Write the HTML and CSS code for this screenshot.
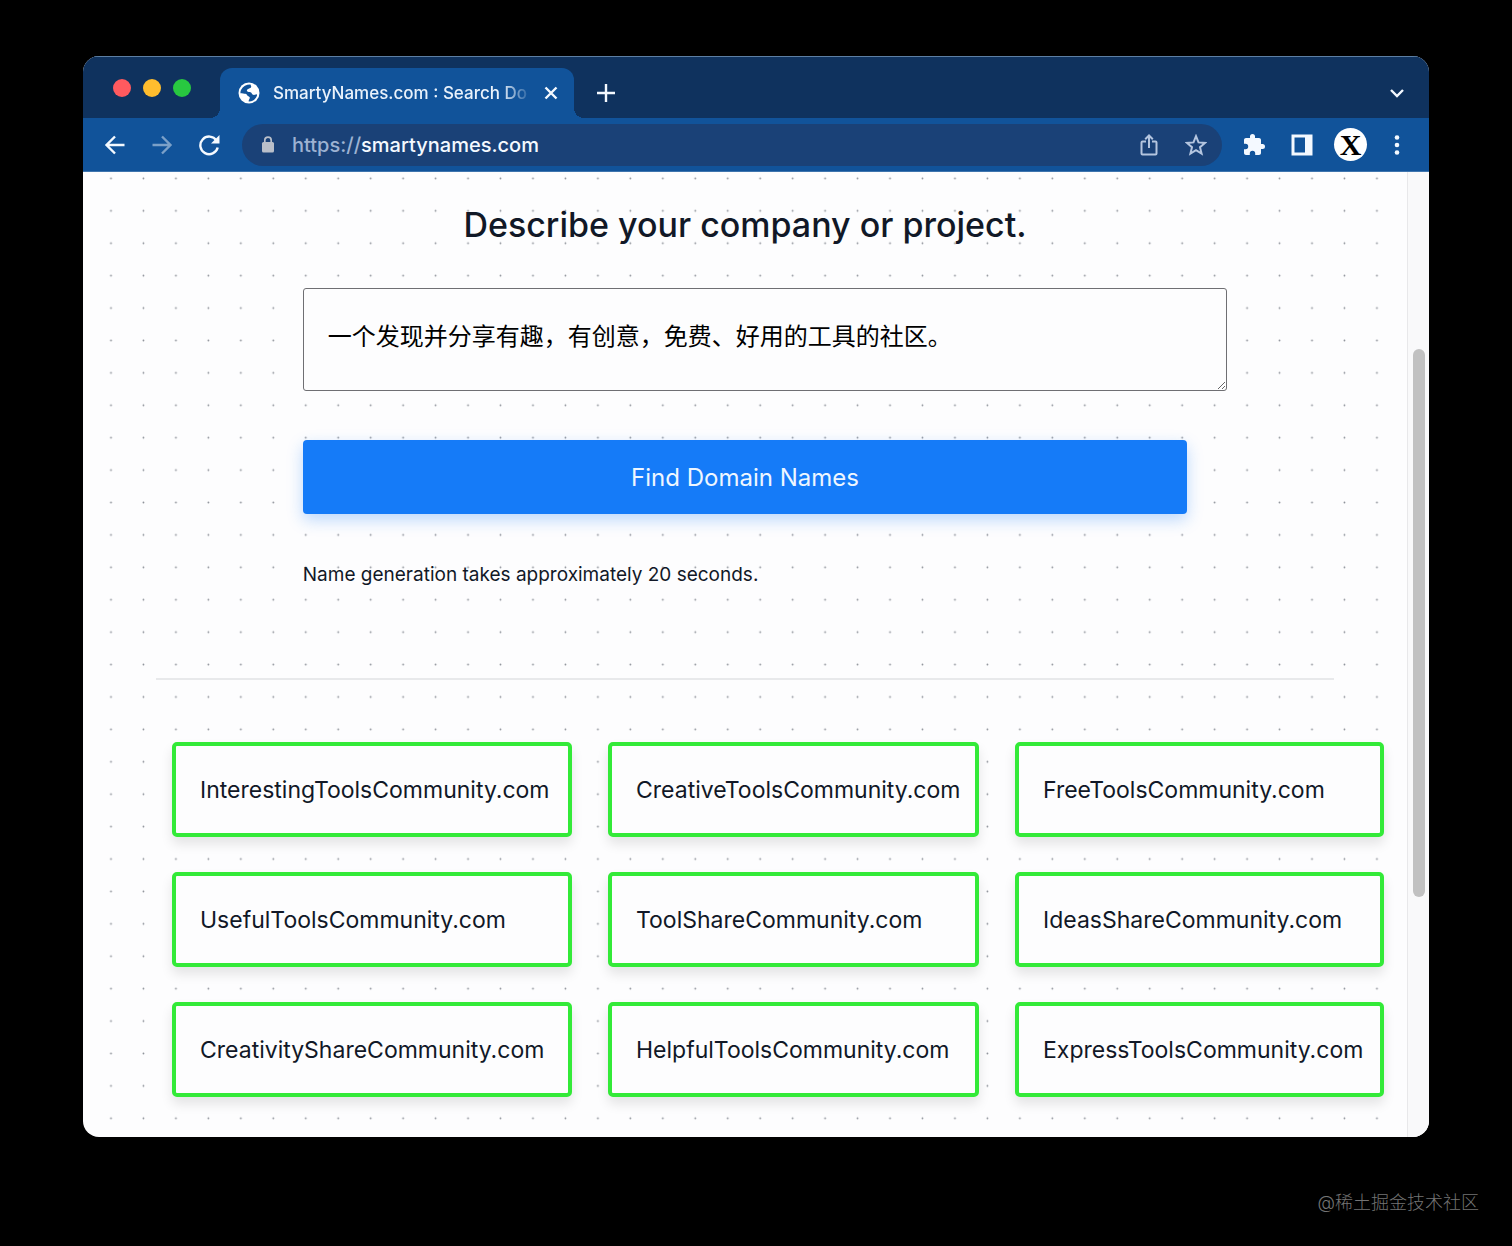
FILE: index.html
```html
<!DOCTYPE html>
<html lang="en">
<head>
<meta charset="utf-8">
<title>SmartyNames.com : Search Domain Names</title>
<link rel="stylesheet" href="styles.css">
</head>
<body>
<div class="window">
  <header class="tabstrip">
    <div class="lights" aria-hidden="true"><span class="light red"></span><span class="light yellow"></span><span class="light green"></span></div>
    <div class="tab">
      <svg class="favicon" viewBox="0 0 22 22"><circle cx="11" cy="11" r="10.500" fill="#fff"/><path d="M12.500 2.500C9 2.300 5 4 3 8c-.6 1.300-.6 2.300-.5 3.200 2 .3 3.500.2 5 .6 1.800.5 1.500 2 2.800 2.500 1.200.5 1.700 1 1.400 2-.3 1.200-1.200 1.600-1 3.100 3.800.2 7-2.200 8.200-5.600.3-1 .2-1.700-.7-1.600-1.200.2-1.700 1-3.200.6-1.200-.4-1-1.700-2-2.300-1.200-.7-3.300-.2-4-1.400-.5-1 .5-2 1.700-2.400 1.300-.5 2.300-.6 2.500-1.900.1-.8-.4-1.300-.7-2.300z" fill="#11539a"/></svg>
      <span class="tab-title">SmartyNames.com : Search Do</span>
      <button class="icon-btn tab-close" aria-label="Close tab"><svg width="14" height="14" viewBox="0 0 14 14"><path d="M1.500 1.500l11 11M12.500 1.500l-11 11"/></svg></button>
    </div>
    <button class="icon-btn new-tab" aria-label="New tab"><svg width="18" height="18" viewBox="0 0 18 18"><path d="M9 0v18M0 9h18"/></svg></button>
    <button class="icon-btn tab-search" aria-label="Search tabs"><svg width="14" height="10" viewBox="0 0 14 10"><path d="M1 2l6 6 6-6"/></svg></button>
  </header>

  <nav class="toolbar" aria-label="Browser toolbar">
    <button class="icon-btn" aria-label="Back"><svg width="22" height="22" viewBox="0 0 22 22"><path d="M20.500 11H2.500M11 2.500l-8.500 8.500 8.500 8.500"/></svg></button>
    <button class="icon-btn dim" aria-label="Forward"><svg width="22" height="22" viewBox="0 0 22 22"><path d="M1.500 11h18M11 2.500l8.500 8.500-8.500 8.500"/></svg></button>
    <button class="icon-btn" aria-label="Reload"><svg width="22" height="22" viewBox="0 0 22 22"><path d="M18.500 6.500a8.800 8.800 0 1 0 1.200 7"/><path class="solid" d="M21.500 1v8.500H13z"/></svg></button>
    <div class="address">
      <svg class="lock" width="14" height="17" viewBox="0 0 14 17"><rect x="1" y="6" width="12" height="10.500" rx="1.500" fill="#b9bfca"/><path d="M3.800 7V4.300a3.200 3.200 0 0 1 6.400 0V7" fill="none" stroke="#b9bfca" stroke-width="1.700"/></svg>
      <label class="scheme" for="url">https://</label>
      <input class="url" id="url" type="text" value="smartynames.com">
      <button class="icon-btn pale" aria-label="Share"><svg width="18" height="22" viewBox="0 0 18 22"><path d="M6 7.500H2.500a1 1 0 0 0-1 1V19.500a1 1 0 0 0 1 1h13a1 1 0 0 0 1-1V8.500a1 1 0 0 0-1-1H12M9 14V1.500M5.200 5.200 9 1.500l3.800 3.700"/></svg></button>
      <button class="icon-btn pale" aria-label="Bookmark"><svg width="22" height="22" viewBox="0 0 22 22"><path d="M11 2.200l2.500 6.200 6.600.5-5.100 4.300 1.600 6.500-5.600-3.500-5.600 3.500L7 13.200 1.900 8.900l6.600-.5z"/></svg></button>
    </div>
    <button class="icon-btn" aria-label="Extensions"><svg width="24" height="24" viewBox="0 0 24 24"><path class="solid" d="M20.500 11H19V7c0-1.100-.9-2-2-2h-4V3.500a2.500 2.500 0 0 0-5 0V5H4c-1.100 0-2 .9-2 2v3.800h1.500a2.700 2.700 0 0 1 0 5.400H2V20c0 1.100.9 2 2 2h3.800v-1.500a2.700 2.700 0 0 1 5.400 0V22H17c1.100 0 2-.9 2-2v-4h1.500a2.500 2.500 0 0 0 0-5z"/></svg></button>
    <button class="icon-btn" aria-label="Side panel"><svg width="22" height="22" viewBox="0 0 22 22"><path class="solid" fill-rule="evenodd" d="M.5.500h21v21H.5zM3.500 3.500v15h10.500v-15z"/></svg></button>
    <button class="avatar" aria-label="Profile">X</button>
    <button class="icon-btn" aria-label="Menu"><svg width="6" height="20" viewBox="0 0 6 20"><g class="solid"><circle cx="3" cy="2.500" r="2.300"/><circle cx="3" cy="10" r="2.300"/><circle cx="3" cy="17.500" r="2.300"/></g></svg></button>
  </nav>

  <div class="viewport">
    <main class="page">
      <svg class="dots" aria-hidden="true"><defs><pattern id="dot" x="11.800" y="-9.800" width="32.460" height="32.410" patternUnits="userSpaceOnUse"><circle cx="16.200" cy="16.200" r=".9" fill="#8d9199"/></pattern></defs><rect width="98.500%" height="100%" fill="url(#dot)"/></svg>
      <form class="search">
        <h1><label for="description">Describe your company or project.</label></h1>
        <textarea id="description" rows="1">一个发现并分享有趣，有创意，免费、好用的工具的社区。</textarea>
        <button class="find" type="button">Find Domain Names</button>
        <p class="note">Name generation takes approximately 20 seconds.</p>
      </form>
      <hr>
      <ul class="results">
        <li>InterestingToolsCommunity.com</li>
        <li>CreativeToolsCommunity.com</li>
        <li>FreeToolsCommunity.com</li>
        <li>UsefulToolsCommunity.com</li>
        <li>ToolShareCommunity.com</li>
        <li>IdeasShareCommunity.com</li>
        <li>CreativityShareCommunity.com</li>
        <li>HelpfulToolsCommunity.com</li>
        <li>ExpressToolsCommunity.com</li>
      </ul>
    </main>
    <div class="scrollbar" aria-hidden="true"><div class="thumb"></div></div>
  </div>
</div>
<footer class="credit">@稀土掘金技术社区</footer>
</body>
</html>
```
FILE: styles.css
```css
* { box-sizing: border-box; }

body {
  margin: 0;
  padding: 56px 83px 0;
  background: #000;
  color: #111827;
  font-family: Inter, "Noto Sans CJK SC", sans-serif;
}

button, input, textarea { font-family: inherit; }

.window {
  border-radius: 16px;
  overflow: hidden;
  background: #fdfdfe;
}

/* Tab strip */
.tabstrip {
  display: flex;
  align-items: flex-end;
  height: 62px;
  padding-right: 24px;
  background: #0f325e;
  border-top: 1px solid #5d7fa3;
}

.lights {
  display: flex;
  gap: 12px;
  width: 137px;
  padding: 0 0 21px 30px;
}

.light { width: 18px; height: 18px; border-radius: 50%; }
.red { background: #ff5a5f; }
.yellow { background: #ffbd2e; }
.green { background: #28c840; }

.tab {
  position: relative;
  display: flex;
  align-items: center;
  width: 354px;
  height: 50px;
  padding: 0 16px 0 18px;
  border-radius: 12px 12px 0 0;
  background: #11539a;
}

.tab::before, .tab::after {
  content: "";
  position: absolute;
  bottom: 0;
  width: 10px;
  height: 10px;
}
.tab::before { right: 100%; background: radial-gradient(circle at 0 0, transparent 10px, #11539a 10px); }
.tab::after { left: 100%; background: radial-gradient(circle at 100% 0, transparent 10px, #11539a 10px); }

.favicon { flex: none; width: 22px; height: 22px; margin-right: 13px; }

.tab-title {
  flex: 1;
  white-space: nowrap;
  color: #eaf2fb;
  font-size: 17px;
  font-weight: 500;
  mask-image: linear-gradient(to right, #000 88%, transparent);
}

.icon-btn {
  display: flex;
  flex: none;
  align-items: center;
  justify-content: center;
  padding: 0;
  border: 0;
  background: none;
  color: #f4f9ff;
}
.icon-btn path { fill: none; stroke: currentColor; stroke-width: 2.4; }
.icon-btn .solid { fill: currentColor; stroke: none; }
.dim { color: #7ba0c8; }
.pale { color: #b4c5df; }
.pale path { stroke-width: 2; }

.tab-close { width: 14px; margin-left: 12px; }
.new-tab { height: 50px; margin-left: 23px; }
.tab-search { height: 50px; margin-left: auto; width: 16px; }

/* Toolbar */
.toolbar {
  display: flex;
  align-items: center;
  gap: 25px;
  height: 54px;
  padding: 0 29px 0 21px;
  background: #11539a;
  border-bottom: 1px solid #3f75ae;
}

.address {
  display: flex;
  flex: 1;
  align-items: center;
  height: 42px;
  margin: 0 -5px 0 -3px;
  padding: 0 15px 0 19px;
  border-radius: 21px;
  background: #1a4177;
  font-size: 20px;
}
.lock { margin-right: 17px; }
.scheme { color: #9db2d2; }
.scheme, .url { font-weight: 500; }
.url {
  flex: 1;
  min-width: 0;
  padding: 0;
  border: 0;
  outline: 0;
  background: none;
  color: #f4f9ff;
  font-size: 20px;
}
.address .icon-btn + .icon-btn { margin-left: 27px; }

.avatar {
  flex: none;
  width: 33px;
  height: 33px;
  margin: 0 2px 0 -4px;
  padding: 0;
  border: 0;
  border-radius: 50%;
  background: #fff;
  color: #000;
  font: bold 30px/33px "Liberation Serif", serif;
}

/* Page */
.viewport { display: flex; }

.page {
  position: relative;
  flex: 1;
  min-width: 0;
  padding: 29px 0 40px;
}

.dots { position: absolute; inset: 0; width: 100%; height: 100%; }
.search, hr, .results { position: relative; }

.search { width: 66.8%; margin: 0 auto; }

h1 {
  margin: 0 0 39px;
  font-size: 34px;
  line-height: 48px;
  font-weight: 500;
  text-align: center;
}

textarea {
  display: block;
  width: calc(100% + 40px);
  height: 103px;
  padding: 32px 24px;
  border: 1px solid #6f6f73;
  border-radius: 3px;
  background: #fdfdfe;
  color: #000;
  font-size: 24px;
  line-height: 32px;
}

.find {
  display: block;
  width: 100%;
  height: 74px;
  margin: 49px 0 45px;
  border: 0;
  border-radius: 4px;
  background: #157bf8;
  box-shadow: 0 6px 16px rgba(21, 123, 248, .28);
  color: #eef6ff;
  font-size: 24px;
}

.note { margin: 0; font-size: 19px; line-height: 32px; }

hr {
  width: 89%;
  margin: 87px auto 62px;
  border: 0;
  border-top: 2px solid #e8e9eb;
}

.results {
  display: grid;
  grid-template-columns: 400fr 371fr 369fr;
  gap: 35px 36px;
  margin: 0 23px 0 89px;
  padding: 0;
  list-style: none;
}

.results li {
  min-width: 0;
  padding: 28px 20px 26px 24px;
  border: 4px solid #33ea38;
  border-radius: 5px;
  background: #fdfdfe;
  box-shadow: 0 7px 12px rgba(0, 0, 0, .1);
  font-size: 23px;
  line-height: 33px;
  white-space: nowrap;
}

.scrollbar {
  display: flex;
  flex-direction: column;
  width: 22px;
  padding: 0 4px 0 5px;
  background: #f9f9fa;
  border-left: 1px solid #e8e8ea;
}
.scrollbar::before { content: ""; flex: 177; }
.thumb { flex: 548; border-radius: 6px; background: #c1c1c1; }
.scrollbar::after { content: ""; flex: 240; }

.credit {
  margin: 52px -50px 0 0;
  color: #747474;
  font-size: 18px;
  font-weight: 300;
  line-height: 28px;
  text-align: right;
}
```
